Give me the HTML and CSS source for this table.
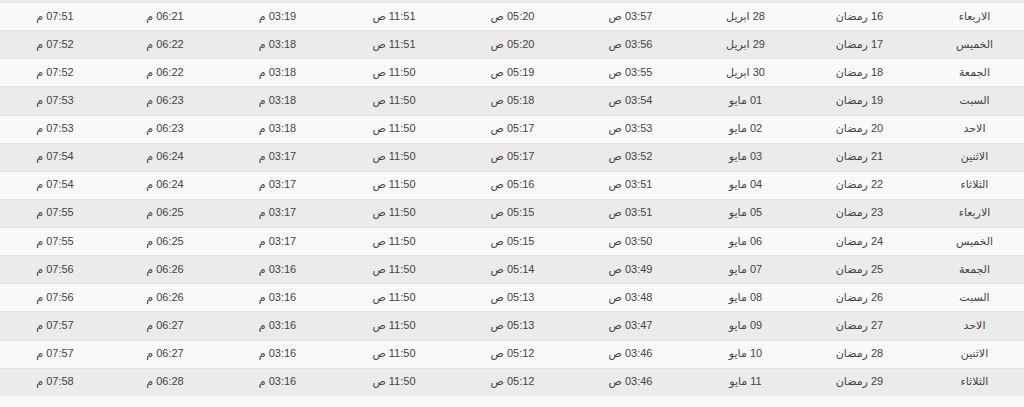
FILE: index.html
```html
<!DOCTYPE html>
<html lang="ar" dir="rtl">
<head>
<meta charset="utf-8">
<title>امساكية رمضان</title>
<link rel="stylesheet" href="styles.css">
</head>
<body>
<div class="wrap">
<table class="times">
<colgroup>
<col class="c-day"><col class="c-hijri"><col class="c-greg"><col class="c-fajr"><col class="c-sun"><col class="c-dhuhr"><col class="c-asr"><col class="c-magh"><col class="c-isha">
</colgroup>
<tbody>
<tr><td class="day">الاربعاء</td><td>16 رمضان</td><td>28 ابريل</td><td>03:57 ص</td><td>05:20 ص</td><td>11:51 ص</td><td>03:19 م</td><td>06:21 م</td><td>07:51 م</td></tr>
<tr class="odd"><td class="day">الخميس</td><td>17 رمضان</td><td>29 ابريل</td><td>03:56 ص</td><td>05:20 ص</td><td>11:51 ص</td><td>03:18 م</td><td>06:22 م</td><td>07:52 م</td></tr>
<tr><td class="day">الجمعة</td><td>18 رمضان</td><td>30 ابريل</td><td>03:55 ص</td><td>05:19 ص</td><td>11:50 ص</td><td>03:18 م</td><td>06:22 م</td><td>07:52 م</td></tr>
<tr class="odd"><td class="day">السبت</td><td>19 رمضان</td><td>01 مايو</td><td>03:54 ص</td><td>05:18 ص</td><td>11:50 ص</td><td>03:18 م</td><td>06:23 م</td><td>07:53 م</td></tr>
<tr><td class="day">الاحد</td><td>20 رمضان</td><td>02 مايو</td><td>03:53 ص</td><td>05:17 ص</td><td>11:50 ص</td><td>03:18 م</td><td>06:23 م</td><td>07:53 م</td></tr>
<tr class="odd"><td class="day">الاثنين</td><td>21 رمضان</td><td>03 مايو</td><td>03:52 ص</td><td>05:17 ص</td><td>11:50 ص</td><td>03:17 م</td><td>06:24 م</td><td>07:54 م</td></tr>
<tr><td class="day">الثلاثاء</td><td>22 رمضان</td><td>04 مايو</td><td>03:51 ص</td><td>05:16 ص</td><td>11:50 ص</td><td>03:17 م</td><td>06:24 م</td><td>07:54 م</td></tr>
<tr class="odd"><td class="day">الاربعاء</td><td>23 رمضان</td><td>05 مايو</td><td>03:51 ص</td><td>05:15 ص</td><td>11:50 ص</td><td>03:17 م</td><td>06:25 م</td><td>07:55 م</td></tr>
<tr><td class="day">الخميس</td><td>24 رمضان</td><td>06 مايو</td><td>03:50 ص</td><td>05:15 ص</td><td>11:50 ص</td><td>03:17 م</td><td>06:25 م</td><td>07:55 م</td></tr>
<tr class="odd"><td class="day">الجمعة</td><td>25 رمضان</td><td>07 مايو</td><td>03:49 ص</td><td>05:14 ص</td><td>11:50 ص</td><td>03:16 م</td><td>06:26 م</td><td>07:56 م</td></tr>
<tr><td class="day">السبت</td><td>26 رمضان</td><td>08 مايو</td><td>03:48 ص</td><td>05:13 ص</td><td>11:50 ص</td><td>03:16 م</td><td>06:26 م</td><td>07:56 م</td></tr>
<tr class="odd"><td class="day">الاحد</td><td>27 رمضان</td><td>09 مايو</td><td>03:47 ص</td><td>05:13 ص</td><td>11:50 ص</td><td>03:16 م</td><td>06:27 م</td><td>07:57 م</td></tr>
<tr><td class="day">الاثنين</td><td>28 رمضان</td><td>10 مايو</td><td>03:46 ص</td><td>05:12 ص</td><td>11:50 ص</td><td>03:16 م</td><td>06:27 م</td><td>07:57 م</td></tr>
<tr class="odd"><td class="day">الثلاثاء</td><td>29 رمضان</td><td>11 مايو</td><td>03:46 ص</td><td>05:12 ص</td><td>11:50 ص</td><td>03:16 م</td><td>06:28 م</td><td>07:58 م</td></tr>
</tbody>
</table>
</div>
</body>
</html>
```
FILE: styles.css
```css
html, body {
  margin: 0;
  padding: 0;
  background: #f9f9f9;
  overflow: hidden;
}
.wrap {
  width: 1024px;
  height: 407px;
  overflow: hidden;
  border-top: 2px solid #ebebeb;
  box-sizing: border-box;
}
.times {
  width: 1024px;
  border-collapse: collapse;
  table-layout: fixed;
  font-family: "Liberation Sans", "DejaVu Sans", sans-serif;
  font-size: 11px;
  color: #444;
}
.c-day { width: 107px; }
.c-hijri { width: 115px; }
.c-greg { width: 113px; }
.c-fajr { width: 117px; }
.c-sun { width: 119px; }
.c-dhuhr { width: 118px; }
.c-asr { width: 115px; }
.c-magh { width: 110px; }
.c-isha { width: 110px; }
.times tr {
  background: #f9f9f9;
}
.times tr.odd {
  background: #ebebeb;
}
.times td {
  height: 28.14px;
  padding: 0 0 1px 0;
  box-sizing: border-box;
  text-align: center;
  vertical-align: middle;
  white-space: nowrap;
  border-top: 1px solid #e3e3e3;
}
.times td.day {
  padding-left: 8px;
}
```
